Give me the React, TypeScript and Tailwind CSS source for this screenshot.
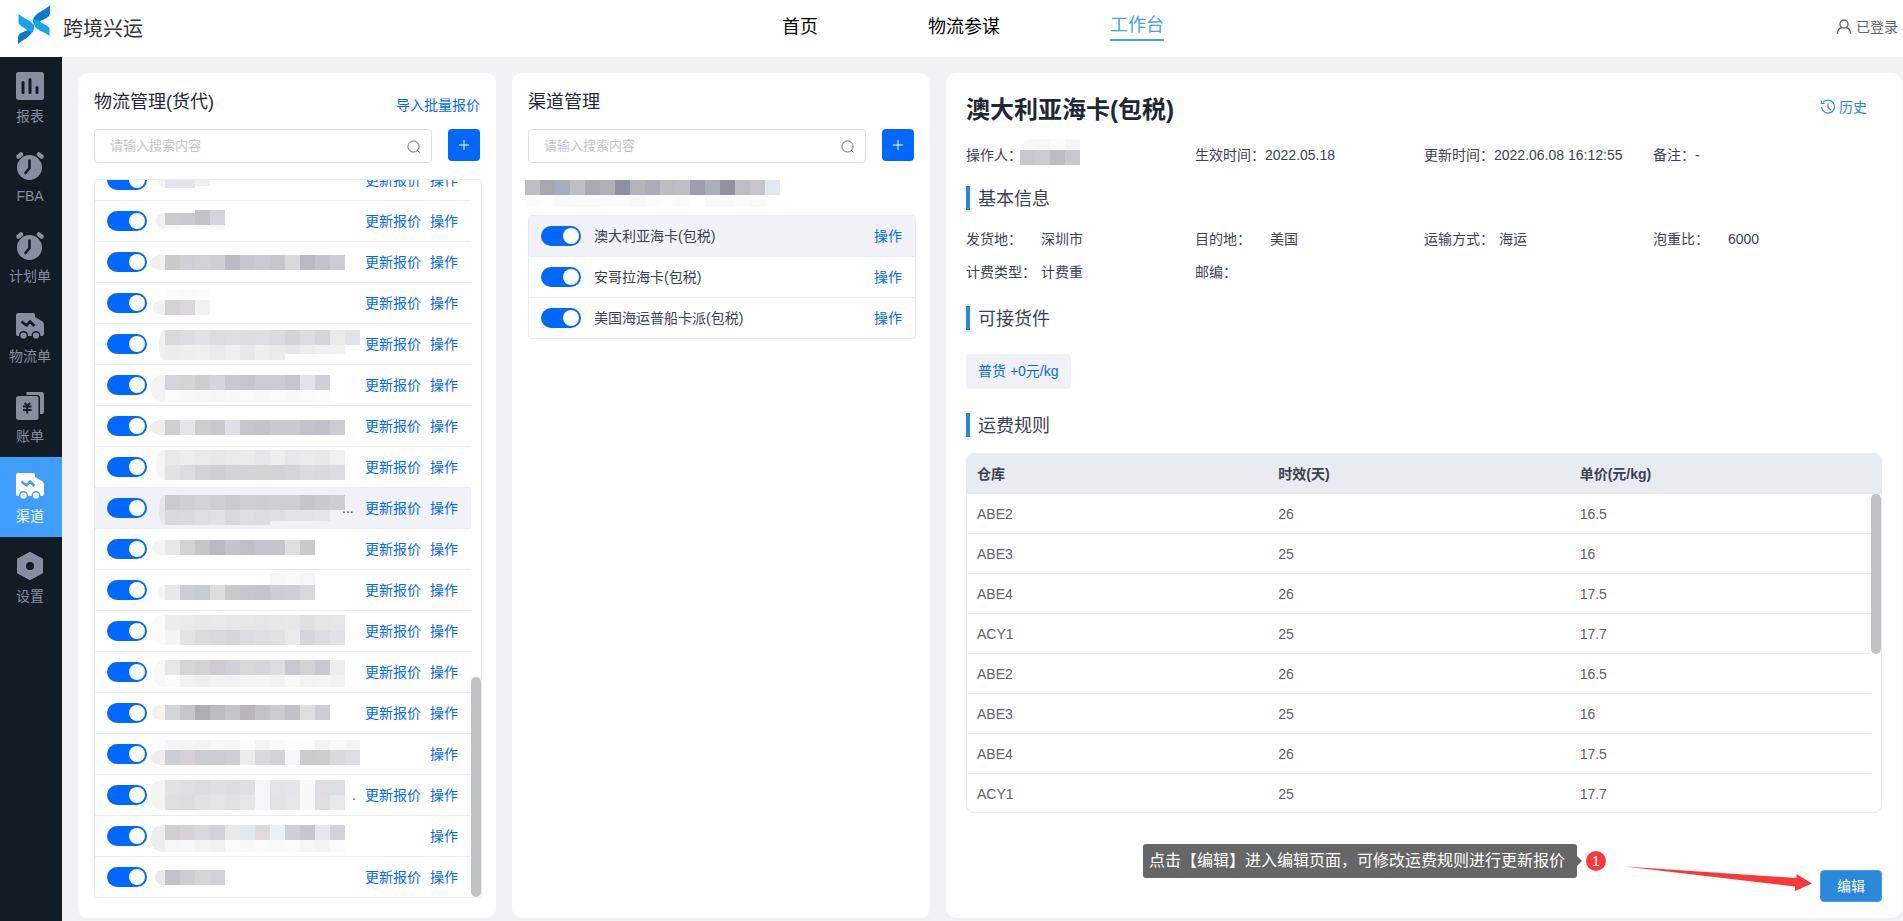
import React from 'react';
import clsx from 'clsx';

type Band = { y: number; h?: number; from?: number; colors: string };

type Provider = {
  lead?: { x: number; color: string };
  bands: Band[];
  tail?: string;
  noQuote?: boolean;
};

const CELL = 15;

// Names are masked: every band is one line of 15px cells
const providers: Provider[] = [
  { lead: { x: 8, color: '#f4f4f5' }, bands: [{ y: 14, h: 14, colors: 'e4e5ea e4e4e7' }, { y: 14, h: 12, from: 2, colors: 'efefef' }] },
  { lead: { x: 6, color: '#f0f0f2' }, bands: [{ y: 12, h: 12, colors: 'cbcbcd c9c9d0' }, { y: 9, from: 2, colors: 'c3c2c5 d2d5dc' }, { y: 24, h: 4, colors: 'f8f8f8 fafafa f8f8f8 f6f6f7' }] },
  { lead: { x: 0, color: '#f1eff0' }, bands: [{ y: 13, colors: 'cacacb d0d0d4 d0d3d8 cfcfd2 b9b9c5 c6c6ce cbc9d2 c6c5cc d7d8db bab9c1 c4c2cb cdcdd3' }] },
  { lead: { x: 3, color: '#f2f2f3' }, bands: [{ y: 6, h: 11, from: 0, colors: 'fbfcfb fafbfa fbfcfb' }, { y: 17, colors: 'd3d3d6 d9d7da f0f1f3' }] },
  { lead: { x: 9, color: '#f0f0f0' }, bands: [{ y: 6, colors: 'd9d9da dddde1 e1e2e6 dcdddf dfdfe2 dcdde0 dddde2 dbdbdf d2d4d8 dcdcdf d5d5da e9eaea e1e3e8' }, { y: 21, colors: 'ececec eeeeee efeff0 eaeaea efefef e8e8ea eeeeee eaeaea' }, { y: 21, h: 9, from: 8, colors: 'e4e6ea ededee f0f0f0 f1f1f1' }] },
  { lead: { x: 1, color: '#f3f3f3' }, bands: [{ y: 10, colors: 'd6d4da d4d4d4 cdcdd0 d4d4d9 c8c9cc c5c6cb cbcbd0 cccbd0 c5c5ca e3e3e5 cfcfd5' }, { y: 25, h: 12, colors: 'fafafa f7f8f8 f7f7f8 f6f6f7 f8f8f8 fafafa f8f8f8 fafafa f8f8f8 fafafa fbfbfb' }] },
  { lead: { x: 0, color: '#ededec' }, bands: [{ y: 14, colors: 'cfcfcf e4e5e8 cdcdcf cacacc dfdfe8 c5c5ca c2c2c7 c9c9ce cacace c2c2c9 c1c0c8 cccbd2' }] },
  { lead: { x: 6, color: '#f5f5f5' }, bands: [{ y: 3, colors: 'e9e9e9 ededee eaeaea e7e7e8 eaeaea ebebec e5e6e8 eeeeef e6e7e8 eaeaea e8e8e9 f0f0f1' }, { y: 18, colors: 'e2e2e3 dcdcde d2d2d6 cfcfd3 d4d4d8 d1d3d7 d3d3d3 d3d3d5 d5d4d8 dbdade d9d8dc dcdce1' }] },
  { lead: { x: 9, color: '#e6e7eb' }, bands: [{ y: 7, colors: 'cacacf cfcfd3 cfd3d8 cfcfd3 cbcacf cfcfd3 cdced2 cfcfd2 cfced3 c5c4ca cacace cdced2' }, { y: 22, colors: 'd9d9dd dadadd dddee2 e0e0e5 d9d8de dddde2 dcdbe1' }, { y: 22, h: 11, from: 7, colors: 'dddee2 e2e2e7 e2e3e7 e4e4e9' }], tail: '...' },
  { lead: { x: 2, color: '#f3f3f3' }, bands: [{ y: 11, colors: 'e7e7e8 d2d1d4 c5c5c8 b9b8bf c4c3c9 c0c0c4 c4c4ce c5c5c9 dfdfe0 cacace' }] },
  { lead: { x: 8, color: '#f6f6f6' }, bands: [{ y: 3, h: 12, from: 7, colors: 'f6f7f7 f9f9f9 f4f5f6' }, { y: 15, colors: 'e8e8e9 cdcdd3 c7cccf dddddf c9c9ca c7c6ca c5c4cd cdcdd2 cecfd3 d7d7dc' }] },
  { lead: { x: 1, color: '#fafafa' }, bands: [{ y: 4, colors: 'ececee ebebeb e8e8e8 e9e9ea e7e7e8 e7e8e8 e6e6e8 e7e7e7 e8e8e9 e0e0e2 e5e5e6 e6e6e8' }, { y: 19, colors: 'f4f4f5 e3e3e2 dbdbde d9d9dc d6d6d8 dbdbe0 dfdfe1 e0e1e2 eaeaea d5d6dc dcdbdf e1e2e6' }] },
  { lead: { x: 4, color: '#f7f8f8' }, bands: [{ y: 8, colors: 'e6e6e8 d5d5d7 d2d2d5 cdcbd0 d0d0d8 d9d9dc d5d5da dddddf c7c7ce d2d2d3 c9c8ce ededee' }, { y: 23, h: 12, colors: 'fbfcfc f1f1f1 efefef f2f2f2 f1f1f1 f3f3f4 f5f5f5 f2f2f3 f8f8f8 f3f3f3 f4f4f4 f2f2f2' }] },
  { lead: { x: 2, color: '#f6f2ee' }, bands: [{ y: 12, colors: 'd4d5d8 c5c5ca adadb4 bdbcc2 c4c5c9 b8b4bc c2c3c8 cccbd1 c1c1c6 dededf cdccd2' }] },
  { lead: { x: 0, color: '#f0edf0' }, noQuote: true, bands: [{ y: 6, h: 10, from: 0, colors: 'f4f5f6 f4f4f5 f2f2f3 f6f6f7 f6f6f7 fafdfc f3f3f4 f9f9f9 fcfcfb fcfcfb f2f2f2 f8f8f8 f3f3f3' }, { y: 16, colors: 'cdcdd4 d5d0d5 cbccd2 cbccd2 cecfd4 ebebea d9d9db d3d2d6 f4f6f8 cbcbce cccbce dadadd dddde2' }] },
  { lead: { x: 0, color: '#f4f4f4' }, bands: [{ y: 5, colors: 'e2e2e3 dfdfe2 dddde1 e0e0e2 dcdce2 dfdfe3 f3f5f8 e4e4e6 e4e4e9 f8f8f8 e0dde2 dddee2' }, { y: 20, colors: 'dfdfe0 dddde0 e2e2e4 e3e4e4 e1e1e5 e6e6e8 f3f5f7 e3e3e4 e6e6ea f8f8f8 e0dee1 e9e9eb' }], tail: '.' },
  { lead: { x: 1, color: '#ededee' }, noQuote: true, bands: [{ y: 9, colors: 'cfcfd1 d7d2d5 d5d7da d2d2d7 e8e9e8 e5e8ea e0dadd eaf0f3 cfced2 c8c6cc e7e6e8 d3d4da' }, { y: 24, h: 12, colors: 'f6f6f6 f7f7f7 f3f3f3 f1f1f1 fafcfb f8f8f8 fafafa f8f9fb fafafa f5f5f5 f3f3f3 fafcfb' }] },
  { lead: { x: 5, color: '#e9e9ec' }, bands: [{ y: 13, colors: 'c4c3cb cecdd2 d5d5d7 d2d1d7' }] },
];

const channels = ['澳大利亚海卡(包税)', '安哥拉海卡(包税)', '美国海运普船卡派(包税)'];

const rates = [
  ['ABE2', '26', '16.5'],
  ['ABE3', '25', '16'],
  ['ABE4', '26', '17.5'],
  ['ACY1', '25', '17.7'],
  ['ABE2', '26', '16.5'],
  ['ABE3', '25', '16'],
  ['ABE4', '26', '17.5'],
  ['ACY1', '25', '17.7'],
];

const basics = [
  ['发货地：', '深圳市'],
  ['目的地：', '美国'],
  ['运输方式：', '海运'],
  ['泡重比：', '6000'],
  ['计费类型：', '计费重'],
  ['邮编：', ''],
];

const Cells: React.FC<{ bands: Band[]; offset?: number }> = ({ bands, offset = 0 }) => (
  <>
    {bands.map((band, b) =>
      band.colors.split(' ').map((color, i) => (
        <rect
          key={`${b}-${i}`}
          x={offset + ((band.from ?? 0) + i) * CELL}
          y={band.y}
          width={CELL}
          height={band.h ?? CELL}
          fill={`#${color}`}
        />
      ))
    )}
  </>
);

const MaskedName: React.FC<{ item: Provider }> = ({ item }) => {
  const main = item.bands.filter((b) => b.from === undefined);
  const top = Math.min(...main.map((b) => b.y));
  const bottom = Math.max(...main.map((b) => b.y + (b.h ?? CELL)));
  const lead = item.lead;
  return (
    <svg className="shrink-0" width={item.tail === '...' ? 192 : 202} height="40" overflow="visible" shapeRendering="crispEdges" aria-hidden="true">
      {lead && (
        <path
          d={`M15 ${top}Q${lead.x} ${top} ${lead.x} ${(top + bottom) / 2}Q${lead.x} ${bottom} 15 ${bottom}Z`}
          fill={lead.color}
        />
      )}
      <Cells bands={item.bands} offset={15} />
    </svg>
  );
};

/* Sidebar icons, 28x28. `cut` is the colour of the parts that are punched out */
type IconProps = { cut: string };

const ReportIcon: React.FC<IconProps> = ({ cut }) => (
  <svg width="28" height="28" viewBox="0 0 28 28" fill="none">
    <rect width="28" height="28" rx="2.500" fill="currentColor" />
    <path d="M7 10.500v10M14 7.500v13M21 15.500v5" stroke={cut} strokeWidth="3" strokeLinecap="round" />
  </svg>
);

const ClockIcon: React.FC<IconProps> = ({ cut }) => (
  <svg width="28" height="28" viewBox="0 0 28 28" fill="none">
    <circle cx="13.500" cy="15.500" r="12.500" fill="currentColor" />
    <path d="M2.500 4.500L5 2.500M23 2.500L25.500 4.500" stroke="currentColor" strokeWidth="4.500" strokeLinecap="round" />
    <path d="M13.500 8.500v7.500l-4 5" stroke={cut} strokeWidth="2.600" strokeLinecap="round" strokeLinejoin="round" />
  </svg>
);

const TruckIcon: React.FC<IconProps> = ({ cut }) => (
  <svg width="28" height="28" viewBox="0 0 28 28" fill="none">
    <path
      d="M2 1h15q2 0 2 2v2l7.500 4.500q1.500 1 1.500 2.500v10q0 2-2 2H2q-2 0-2-2V3q0-2 2-2z"
      fill="currentColor"
    />
    <path d="M5.500 9.500l5 4 3.500-4 4.500 4.500" stroke={cut} strokeWidth="2.600" strokeLinejoin="round" />
    <circle cx="7.500" cy="23.500" r="3.800" fill="currentColor" stroke={cut} strokeWidth="1.400" />
    <circle cx="20" cy="23.500" r="3.800" fill="currentColor" stroke={cut} strokeWidth="1.400" />
  </svg>
);

const BillIcon: React.FC<IconProps> = ({ cut }) => (
  <svg width="28" height="28" viewBox="0 0 28 28" fill="none">
    <path d="M10.500 0H26q2 0 2 2v18q0 2-2 2h-2V6q0-3-3-3H10.500z" fill="currentColor" />
    <rect y="4" width="22.500" height="24" rx="2.500" fill="currentColor" />
    <path d="M8.500 11l2.700 2.700L14 11M7 14.500h8.500M7 18h8.500M11.200 14v7.500" stroke={cut} strokeWidth="2" />
  </svg>
);

const SettingIcon: React.FC<IconProps> = ({ cut }) => (
  <svg width="28" height="28" viewBox="0 0 28 28" fill="none">
    <path d="M14 1l12 6.500v13L14 27 2 20.500v-13z" fill="currentColor" stroke="currentColor" strokeWidth="2" strokeLinejoin="round" />
    <circle cx="14" cy="14" r="4" fill={cut} />
  </svg>
);

const menus = [
  { label: '报表', Icon: ReportIcon },
  { label: 'FBA', Icon: ClockIcon },
  { label: '计划单', Icon: ClockIcon },
  { label: '物流单', Icon: TruckIcon },
  { label: '账单', Icon: BillIcon },
  { label: '渠道', Icon: TruckIcon, active: true },
  { label: '设置', Icon: SettingIcon },
];

const Header: React.FC = () => (
  <header className="flex h-[57px] shrink-0 items-center bg-white">
    <div className="flex shrink-0 items-center pl-[17px]">
      <svg className="mb-2" width="34" height="42" viewBox="0 0 34 42" aria-hidden="true">
        <path d="M1 40.500V33C2 28.500 7 28 10.500 26C13 24.500 16 22 16.500 20C18 26 15 29 12 32C8 36 5 36 1 40.500Z" fill="#0a7bcb" />
        <path d="M1.500 10V19C4 23 8 24 10.500 26.500L14 29C18 26 17.500 20.500 14 18C10 15 6 14 1.500 10Z" fill="#12a5ee" />
        <path d="M33 1V10C31 15 26 15 22 18L19 21C15.500 19 15 15.500 18 12C22 7.500 28 6 33 1Z" fill="#0a7bcb" />
        <path d="M16.500 18C17 24 22 26 26 28C29 29 31 31 32.500 32V24C29 20 24 19.500 22.500 17C20 15 17 14 16.500 18Z" fill="#12a5ee" />
      </svg>
      <span className="ml-3 text-xl leading-7 text-[#303133]">跨境兴运</span>
    </div>
    <nav className="flex flex-1 items-center justify-center gap-[110px] pb-1 text-lg leading-6 text-black">
      <a href="#home">首页</a>
      <a href="#advisor">物流参谋</a>
      <a href="#workbench" className="border-b-2 border-[#409eff] pb-0.5 text-[#409eff]">工作台</a>
    </nav>
    <div className="flex w-[100px] shrink-0 items-center justify-end gap-1 pr-[5px] pb-1 text-sm text-[#606266]">
      <svg width="16" height="16" viewBox="0 0 16 16" fill="none" stroke="currentColor" strokeWidth="1.300" aria-hidden="true">
        <circle cx="8" cy="5" r="4" />
        <path d="M1.500 15c0-3.500 2-6 4.500-6.500M14.500 15c0-3.500-2-6-4.500-6.500" />
      </svg>
      <span>已登录</span>
    </div>
  </header>
);

const Sidebar: React.FC = () => (
  <aside className="w-[62px] shrink-0 bg-[#111c24]">
    {menus.map(({ label, Icon, active }) => (
      <a
        key={label}
        href={`#${label}`}
        className={clsx(
          'flex h-20 flex-col items-center gap-1.5 pt-[15px] pr-0.5 text-sm leading-5',
          active ? 'bg-[#409eff] text-white' : 'text-[#868ea0]'
        )}
      >
        <Icon cut={active ? '#409eff' : '#111c24'} />
        <span>{label}</span>
      </a>
    ))}
  </aside>
);

const Toggle: React.FC<{ label: string }> = ({ label }) => (
  <input
    type="checkbox"
    role="switch"
    defaultChecked
    aria-label={label}
    className="flex h-5 w-10 shrink-0 cursor-pointer appearance-none items-center rounded-full bg-gray-300 p-0.5 before:h-4 before:w-4 before:rounded-full before:bg-white checked:justify-end checked:bg-[#0068ff]"
  />
);

const SearchBar: React.FC<{ label: string }> = ({ label }) => (
  <div className="flex items-start gap-4">
    <label className="flex h-[34px] min-w-0 flex-1 items-center rounded border border-[#dcdfe6] px-[11px]">
      <input
        type="text"
        aria-label={label}
        placeholder="请输入搜索内容"
        className="min-w-0 flex-1 pl-1 text-[13px] leading-5 outline-none placeholder:text-[#c0c4cc]"
      />
      <svg width="13" height="13" viewBox="0 0 14 14" fill="none" stroke="#606266" aria-hidden="true">
        <circle cx="7" cy="7" r="6" />
        <path d="M11 11l2.500 2.500" />
      </svg>
    </label>
    <button type="button" aria-label="新增" className="flex h-8 w-8 shrink-0 items-center justify-center rounded bg-[#0068ff]">
      <svg width="12" height="12" viewBox="0 0 12 12" stroke="#fff" aria-hidden="true">
        <path d="M6 1v10M1 6h10" />
      </svg>
    </button>
  </div>
);

const SectionTitle: React.FC<{ children: React.ReactNode }> = ({ children }) => (
  <h3 className="h-6 border-l-4 border-[#2b88d9] pl-2 text-lg leading-[26px] text-[#3b4252]">{children}</h3>
);

const ProviderPanel: React.FC = () => (
  <section className="flex w-[418px] shrink-0 flex-col rounded-[10px] bg-white px-4 pt-4 pb-5">
    <div className="mb-[14px] flex items-end justify-between">
      <h2 className="text-lg leading-[26px] text-[#1f2733]">物流管理(货代)</h2>
      <a href="#import" className="text-sm leading-5 text-[#0068ff]">导入批量报价</a>
    </div>
    <SearchBar label="搜索物流" />
    <div className="mt-4 -mr-0.5 flex min-h-0 flex-1 items-end overflow-hidden rounded border border-[#e8ebf0]">
      <ul className="min-w-0 flex-1">
        {providers.map((item, i) => (
          <li
            key={i}
            className={clsx(
              'flex h-[41px] items-center border-b border-[#e8ebf0] pr-[13px] pl-3 text-sm last:h-10 last:border-b-0',
              i === 8 && 'bg-[#f1f2f7]'
            )}
          >
            <Toggle label={`启用物流${i + 1}`} />
            <div className="ml-[3px] flex min-w-0 flex-1 items-center text-[#3b4252]">
              <MaskedName item={item} />
              {item.tail}
            </div>
            {!item.noQuote && <button type="button" className="shrink-0 text-[#0068ff]">更新报价</button>}
            <button type="button" className="ml-[9px] shrink-0 text-[#0068ff]">操作</button>
          </li>
        ))}
      </ul>
      <div className="h-[220px] w-2.5 shrink-0 rounded-full bg-[#c1c2c4]" />
    </div>
  </section>
);

const ChannelPanel: React.FC = () => (
  <section className="flex w-[418px] shrink-0 flex-col rounded-[10px] bg-white px-4 pt-4 pb-5">
    <h2 className="mb-[14px] text-lg leading-[26px] text-[#1f2733]">渠道管理</h2>
    <SearchBar label="搜索渠道" />
    <svg className="mt-[17px] mb-2 -ml-[3px] shrink-0" width="255" height="27" shapeRendering="crispEdges" aria-hidden="true">
      <Cells
        bands={[
          { y: 0, colors: 'bebdc2 a8a8ac a7adba bebfc2 aaaab0 b0b0b7 8e90a0 b5b4ba acacb6 bdbdbf bcc0c6 9d9dab abaeb7 92929c bdbec5 c8c5ca e3e7f0' },
          { y: 15, h: 12, colors: 'fbfbfb fefefe fafafa fafafa fafafa fbfbfb fcfcfc f8f8f8 fcfcfc fdfdfd fbfbfb ffffff f9f9f9 f9f9f9 fcfcfc fafafa fefefe' },
        ]}
      />
    </svg>
    <ul className="-mr-0.5 overflow-hidden rounded border border-[#e8ebf0]">
      {channels.map((name, i) => (
        <li
          key={name}
          className={clsx(
            'flex h-[41px] items-center border-b border-[#e8ebf0] pr-[13px] pl-3 text-sm last:h-10 last:border-b-0',
            i === 0 && 'bg-[#f1f2f7]'
          )}
        >
          <Toggle label={name} />
          <span className="ml-[13px] flex-1 text-[#3b4252]">{name}</span>
          <button type="button" className="text-[#0068ff]">操作</button>
        </li>
      ))}
    </ul>
  </section>
);

const RateTable: React.FC = () => (
  <div className="relative mt-4 min-h-0 flex-1 overflow-hidden rounded-lg border border-[#e8ebf0]">
    <table className="w-full table-fixed border-separate border-spacing-0 text-left text-sm">
      <colgroup>
        <col />
        <col />
        <col />
        <col className="w-2.5" />
      </colgroup>
      <thead>
        <tr className="h-10 bg-[#e8ebf0] text-[#3b4252]">
          <th className="px-2.5 font-bold">仓库</th>
          <th className="px-2.5 font-bold">时效(天)</th>
          <th className="px-2.5 font-bold">单价(元/kg)</th>
          <th />
        </tr>
      </thead>
      <tbody>
        {rates.map((row, i) => (
          <tr key={i} className="h-10 text-[#606266]">
            {row.map((value, j) => (
              <td key={j} className="border-b border-[#ebeef5] px-2.5">{value}</td>
            ))}
            <td />
          </tr>
        ))}
      </tbody>
    </table>
    {/* Scroll thumb over the spare column */}
    <div className="absolute top-10 right-0 h-40 w-2.5 rounded-full bg-[#c1c2c4]" />
  </div>
);

const DetailPanel: React.FC = () => (
  <section className="flex min-w-0 flex-1 flex-col rounded-[10px] bg-white px-5 pt-5 pb-4 text-sm leading-5 text-[#3b4252]">
    <div className="flex items-start justify-between">
      <h1 className="text-2xl leading-[34px] font-bold text-[#1f2733]">澳大利亚海卡(包税)</h1>
      <button type="button" className="flex items-center gap-[3px] pr-[15px] leading-7 text-[#2b88d9]">
        <svg width="16" height="16" viewBox="0 0 16 16" fill="none" stroke="currentColor" strokeWidth="1.200" aria-hidden="true">
          <path d="M3 3.500a6.500 6.500 0 1 1-1.400 4.500M1.500 1.500v3h3M8 4.500v4l3 2.500" />
        </svg>
        历史
      </button>
    </div>

    <div className="mt-3 grid h-[26px] grid-cols-4 leading-[32px]">
      <div className="flex">
        操作人：
        <svg className="-ml-0.5" width="60" height="26" shapeRendering="crispEdges" aria-hidden="true">
          <path d="M0 11Q2 0 15 0V11z" fill="#f8f8f8" />
          <Cells
            bands={[
              { y: 0, h: 11, from: 1, colors: 'f7f7f7 fbfbfb f4f5f6' },
              { y: 11, colors: 'c9c8ce cccbd0 bcbcc2 c8c8cd' },
            ]}
          />
        </svg>
      </div>
      <div>生效时间：2022.05.18</div>
      <div>更新时间：2022.06.08 16:12:55</div>
      <div>备注：-</div>
    </div>

    <div className="mt-[21px]">
      <SectionTitle>基本信息</SectionTitle>
    </div>
    <dl className="mt-[19px] grid grid-cols-4 gap-y-[13px]">
      {basics.map(([label, value]) => (
        <div key={label} className="flex">
          <dt className="w-[75px] shrink-0">{label}</dt>
          <dd>{value}</dd>
        </div>
      ))}
    </dl>

    <div className="mt-6">
      <SectionTitle>可接货件</SectionTitle>
    </div>
    <div className="mt-6 flex">
      <span className="rounded bg-[#f1f2f7] px-3 leading-[35px] text-[#0068ff]">普货 +0元/kg</span>
    </div>

    <div className="mt-6">
      <SectionTitle>运费规则</SectionTitle>
    </div>
    <RateTable />

    <div className="mt-[31px] flex h-[58px] shrink-0 items-start justify-end">
      <div className="rounded-[3px] bg-[#666666] pr-3 pl-1.5 text-base leading-[34px] whitespace-nowrap text-white">
        点击【编辑】进入编辑页面，可修改运费规则进行更新报价
      </div>
      <svg className="mt-3 mr-1 shrink-0" width="5" height="10" aria-hidden="true">
        <path d="M0 0l5 5-5 5z" fill="#666666" />
      </svg>
      <span className="mt-[7px] flex h-5 w-5 shrink-0 items-center justify-center rounded-full bg-[#fc3737] text-sm text-white">1</span>
      <svg className="mt-[22px] mr-2 ml-[19px] shrink-0" width="187" height="26" viewBox="0 0 187 26" aria-hidden="true">
        <path d="M0 .5L171.500 12V8L187 17.500L170 25V20.500Z" fill="#fc3737" />
      </svg>
      <button type="button" className="h-8 w-[62px] shrink-0 self-end rounded border border-[#409eff] bg-[#2b88d9] text-sm text-white">
        编辑
      </button>
    </div>
  </section>
);

const App: React.FC = () => {
  return (
    <div className='flex h-screen flex-col overflow-hidden bg-[#f2f2f5] font-["Liberation_Sans","Noto_Sans_CJK_SC",sans-serif]'>
      <Header />
      <div className="flex min-h-0 flex-1">
        <Sidebar />
        <main className="flex min-w-0 flex-1 gap-4 pt-4 pr-px pb-[3px] pl-4">
          <ProviderPanel />
          <ChannelPanel />
          <DetailPanel />
        </main>
      </div>
    </div>
  );
};

export default App;
